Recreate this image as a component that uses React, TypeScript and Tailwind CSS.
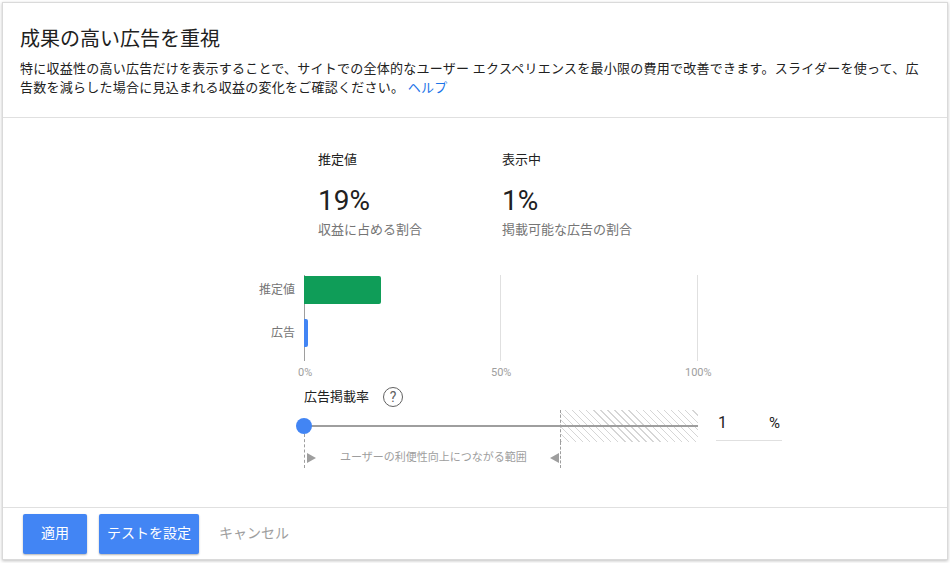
export default function App() {
  const font = { fontFamily: '"Roboto", "Noto Sans CJK JP", sans-serif' };
  return (
    <div className="w-[950px] h-[563px] bg-white p-[2px] pb-[3px]" style={font}>
      <div className="h-full border border-[#dadada] shadow-[0_1px_3px_rgba(0,0,0,0.25)] flex flex-col">
        <div className="px-[17px] pt-[22px] pb-[20px] border-b border-[#e0e0e0]">
          <h1 className="text-[20px] leading-[28px] text-[#212121]">成果の高い広告を重視</h1>
          <p className="mt-[6px] text-[13px] leading-[19px] text-[#212121] tracking-[0.25px]">
            特に収益性の高い広告だけを表示することで、サイトでの全体的なユーザー エクスペリエンスを最小限の費用で改善できます。スライダーを使って、広告数を減らした場合に見込まれる収益の変化をご確認ください。 <span className="text-[#1a73e8]">ヘルプ</span>
          </p>
        </div>
        <div className="flex-1 flex flex-col pl-[301px]">
          <div className="flex pl-[14px] pt-[32px] gap-[122px]">
            <div className="w-[62px] whitespace-nowrap">
              <div className="text-[13px] text-[#212121]">推定値</div>
              <div className="text-[28px] leading-[34px] mt-[14px] text-[#212121]">19%</div>
              <div className="text-[13px] text-[#757575] mt-[2px]">収益に占める割合</div>
            </div>
            <div className="whitespace-nowrap">
              <div className="text-[13px] text-[#212121]">表示中</div>
              <div className="text-[28px] leading-[34px] mt-[14px] text-[#212121]">1%</div>
              <div className="text-[13px] text-[#757575] mt-[2px]">掲載可能な広告の割合</div>
            </div>
          </div>
          {/* chart */}
          <div className="relative mt-[36px] w-[394px] h-[86px]">
            <div className="absolute left-0 top-0 bottom-0 w-px bg-[#9e9e9e]" />
            <div className="absolute left-[196px] top-0 bottom-0 w-px bg-[#e0e0e0]" />
            <div className="absolute left-[393px] top-0 bottom-0 w-px bg-[#e0e0e0]" />
            <div className="absolute left-0 top-[1px] w-[77px] h-[28px] bg-[#0f9d58] rounded-r-[2px]" />
            <div className="absolute left-0 top-[44px] w-[4px] h-[28px] bg-[#4285f4] rounded-r-[2px]" />
            <div className="absolute right-[403px] top-[6px] text-[12px] text-[#757575] whitespace-nowrap">推定値</div>
            <div className="absolute right-[403px] top-[49px] text-[12px] text-[#757575] whitespace-nowrap">広告</div>
            <div className="absolute left-[-6px] top-[90px] text-[11px] text-[#9e9e9e]">0%</div>
            <div className="absolute left-[187px] top-[90px] text-[11px] text-[#9e9e9e]">50%</div>
            <div className="absolute left-[381px] top-[90px] text-[11px] text-[#9e9e9e]">100%</div>
          </div>
          <div className="mt-[26px] flex items-center gap-[14px]">
            <span className="text-[13px] text-[#212121]">広告掲載率</span>
            <span className="w-[20px] h-[20px] rounded-full border-[1.5px] border-[#616161] text-[#616161] text-[14px] flex items-center justify-center leading-none">?</span>
          </div>
          {/* slider + input */}
          <div className="flex items-start gap-[18px] mt-[3px]">
            <div className="relative w-[394px] h-[60px]">
              <div
                className="absolute left-[256px] top-0 w-[138px] h-[32px] border-l border-dashed border-[#9e9e9e]"
                style={{ backgroundImage: "repeating-linear-gradient(45deg, #d6d6d6 0 1px, transparent 1px 5px)" }}
              />
              <div className="absolute left-0 top-[15px] w-[394px] h-[2px] bg-[#9e9e9e]" />
              <div className="absolute left-[-8px] top-[8px] w-[16px] h-[16px] rounded-full bg-[#4285f4]" />
              <div className="absolute left-0 top-[24px] h-[34px] border-l border-dashed border-[#9e9e9e]" />
              <div className="absolute left-[256px] top-[32px] h-[26px] border-l border-dashed border-[#9e9e9e]" />
              <div className="absolute left-[3px] top-[43px] w-0 h-0 border-y-[5px] border-y-transparent border-l-[9px] border-l-[#9e9e9e]" />
              <div className="absolute left-[246px] top-[43px] w-0 h-0 border-y-[5px] border-y-transparent border-r-[9px] border-r-[#9e9e9e]" />
              <div className="absolute left-[36px] top-[40px] text-[11px] text-[#9e9e9e] whitespace-nowrap">ユーザーの利便性向上につながる範囲</div>
            </div>
            <div className="w-[66px] h-[35px] -mt-[4px] border-b border-[#e0e0e0] flex items-center justify-between px-[2px]">
              <span className="text-[16px] text-[#212121]">1</span>
              <span className="text-[15px] text-[#212121]">%</span>
            </div>
          </div>
        </div>
        <div className="border-t border-[#e0e0e0] h-[52px] flex items-center pl-[20px] gap-[12px]">
          <button className="h-[40px] w-[64px] rounded-[2px] bg-[#4285f4] text-white text-[14px] shadow-[0_1px_2px_rgba(0,0,0,0.3)]">適用</button>
          <button className="h-[40px] w-[100px] rounded-[2px] bg-[#4285f4] text-white text-[14px] shadow-[0_1px_2px_rgba(0,0,0,0.3)]">テストを設定</button>
          <button className="h-[40px] px-[8px] text-[#9e9e9e] text-[14px]">キャンセル</button>
        </div>
      </div>
    </div>
  );
}
